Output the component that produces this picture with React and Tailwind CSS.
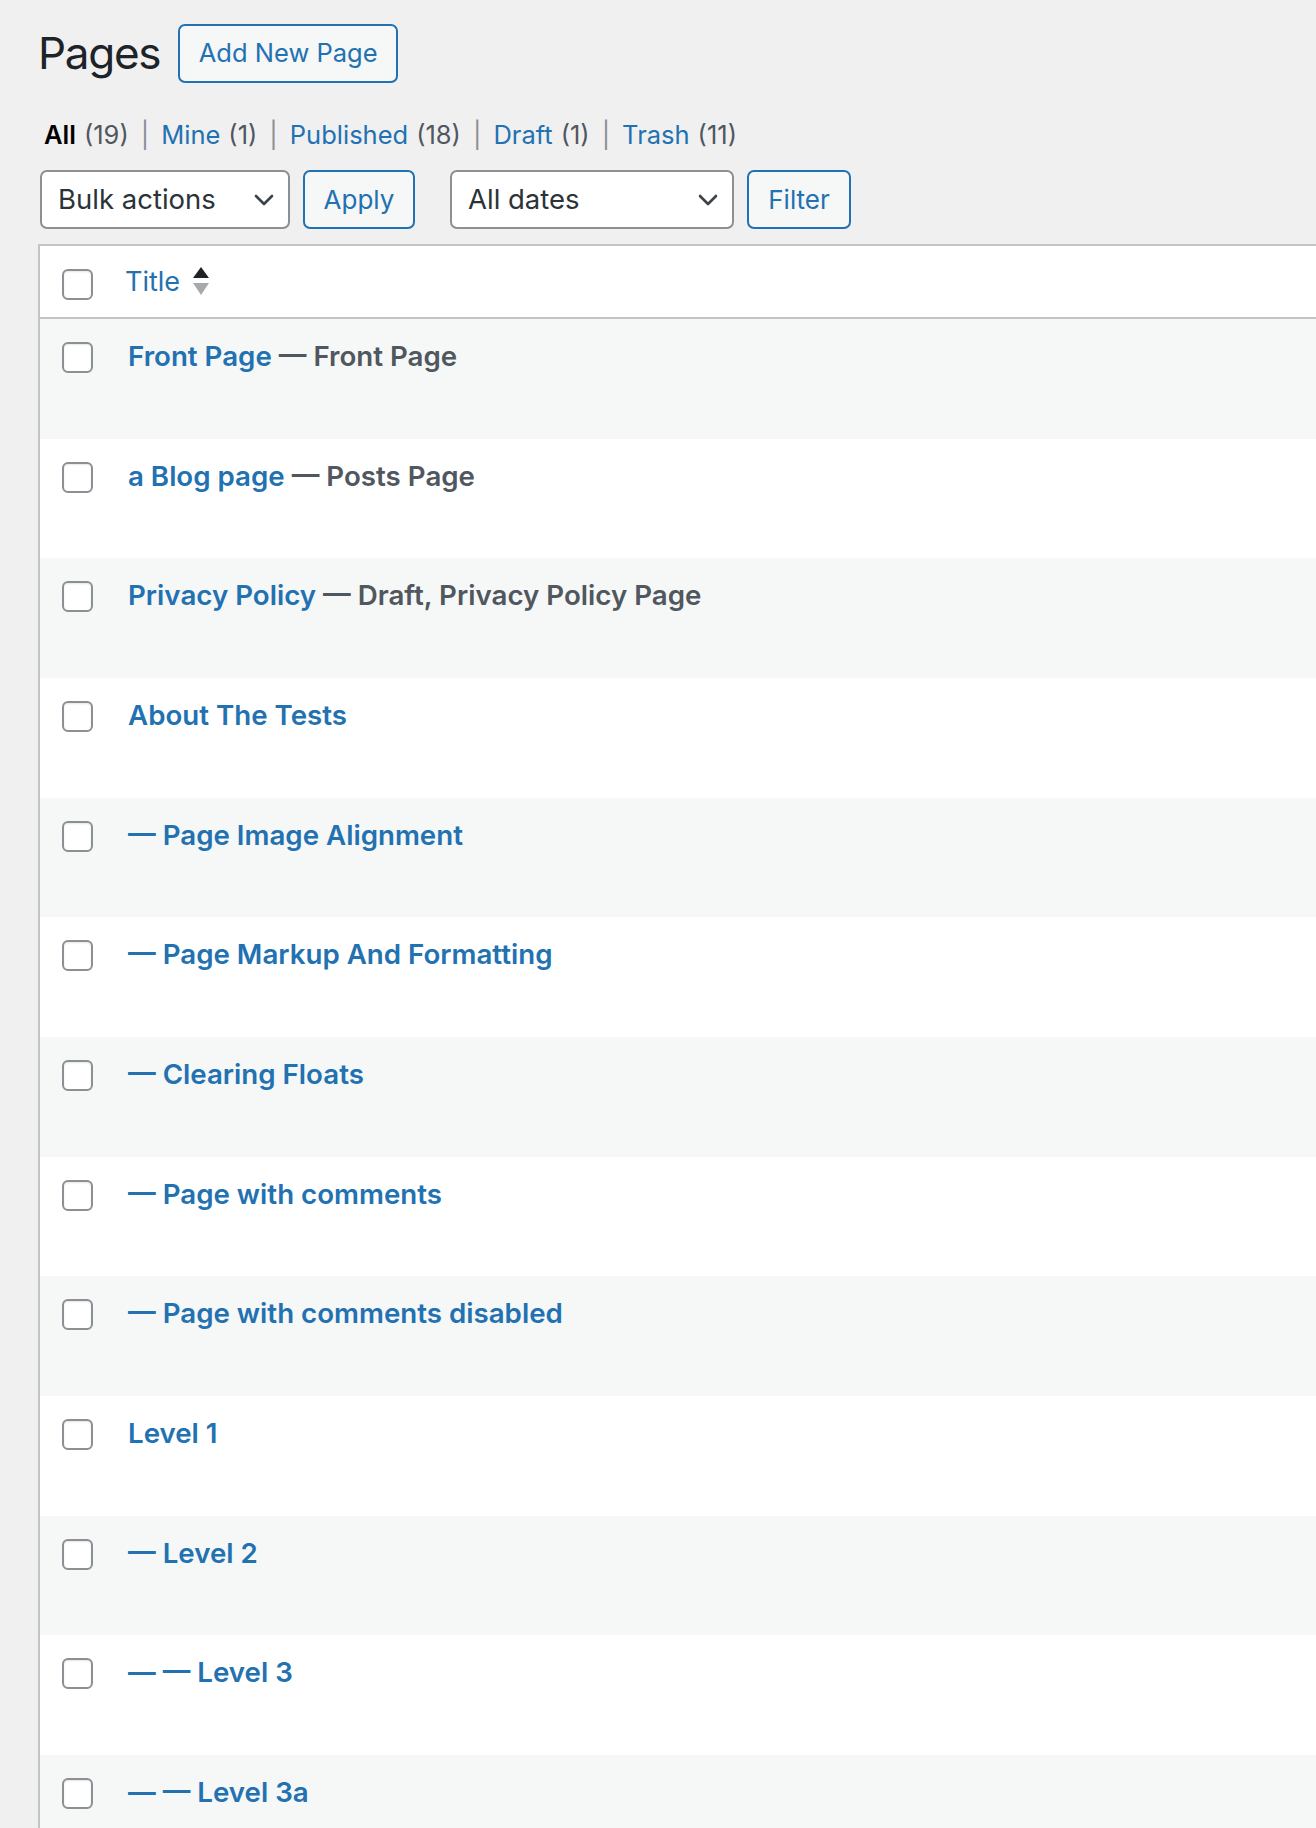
import React from "react";

const rows = [
  { title: "Front Page", state: "Front Page" },
  { title: "a Blog page", state: "Posts Page" },
  { title: "Privacy Policy", state: "Draft, Privacy Policy Page" },
  { title: "About The Tests" },
  { title: "— Page Image Alignment" },
  { title: "— Page Markup And Formatting" },
  { title: "— Clearing Floats" },
  { title: "— Page with comments" },
  { title: "— Page with comments disabled" },
  { title: "Level 1" },
  { title: "— Level 2" },
  { title: "— — Level 3" },
  { title: "— — Level 3a" },
];

function Checkbox() {
  return (
    <span className="block w-[31px] h-[31px] shrink-0 rounded-[6px] border-2 border-[#8c8f94] bg-white shadow-[inset_0_1px_2px_rgba(0,0,0,0.1)]" />
  );
}

function Chevron() {
  return (
    <svg width="20" height="12" viewBox="0 0 20 12" className="shrink-0">
      <path d="M2 2 L10 10 L18 2" fill="none" stroke="#3c434a" strokeWidth="2.6" strokeLinecap="round" strokeLinejoin="round" />
    </svg>
  );
}

function Select({ label, width }) {
  return (
    <div
      className={`flex items-center justify-between h-[59px] bg-white border-2 border-[#8c8f94] rounded-[7px] pl-[16px] pr-[14px] text-[27.5px] text-[#2c3338] ${width}`}
    >
      <span>{label}</span>
      <Chevron />
    </div>
  );
}

function Button({ children, className = "" }) {
  return (
    <div
      className={`flex items-center justify-center h-[59px] bg-[#f6f7f7] border-2 border-[#2271b1] rounded-[7px] text-[#2271b1] ${className}`}
    >
      {children}
    </div>
  );
}

function Sep() {
  return <span className="mx-[12px] text-[#8c8f94]">|</span>;
}

export default function App() {
  return (
    <div className="h-[1828px] overflow-hidden bg-[#f0f0f1] pl-[40px] pt-[24px] font-['Inter','Noto_Sans',sans-serif] text-[#3c434a]">
      {/* Header */}
      <div className="flex items-center">
        <h1 className="-ml-[2px] text-[44px] leading-[59px] text-[#1d2327] tracking-[-1.3px]">Pages</h1>
        <Button className="ml-[18px] w-[220px] text-[25.5px]">Add New Page</Button>
      </div>

      {/* Sub filter links */}
      <div className="mt-[36px] flex items-center text-[25.5px] leading-[32px] pl-[4px]">
        <span className="font-semibold text-black">All</span>
        <span className="ml-[8px] text-[#50575e]">(19)</span>
        <Sep />
        <span className="text-[#2271b1]">Mine</span>
        <span className="ml-[8px] text-[#50575e]">(1)</span>
        <Sep />
        <span className="text-[#2271b1]">Published</span>
        <span className="ml-[8px] text-[#50575e]">(18)</span>
        <Sep />
        <span className="text-[#2271b1]">Draft</span>
        <span className="ml-[8px] text-[#50575e]">(1)</span>
        <Sep />
        <span className="text-[#2271b1]">Trash</span>
        <span className="ml-[8px] text-[#50575e]">(11)</span>
      </div>

      {/* Tablenav */}
      <div className="mt-[19px] flex items-center">
        <Select label="Bulk actions" width="w-[250px]" />
        <Button className="ml-[13px] w-[112px] text-[26px]">Apply</Button>
        <Select label="All dates" width="ml-[35px] w-[284px]" />
        <Button className="ml-[13px] w-[104px] text-[26px]">Filter</Button>
      </div>

      {/* Table */}
      <div className="mt-[15px] -ml-[2px] border-t-2 border-l-2 border-[#c3c4c7]">
        <div className="h-[73px] bg-white border-b-2 border-[#c3c4c7] flex items-start pl-[22px] pt-[23px]">
          <Checkbox />
          <span className="ml-[32px] -mt-[5px] text-[27px] leading-[36px] text-[#2271b1]">Title</span>
          <svg width="16" height="28" viewBox="0 0 16 28" className="ml-[13px] -mt-[2px]">
            <path d="M8 0 L16 11 L0 11 Z" fill="#1d2327" />
            <path d="M0 16 L16 16 L8 28 Z" fill="#a7aaad" />
          </svg>
        </div>
        {rows.map((r, i) => (
          <div
            key={i}
            className={`h-[119.67px] flex items-start pl-[22px] pt-[23px] ${i % 2 === 0 ? "bg-[#f6f7f7]" : "bg-white"}`}
          >
            <Checkbox />
            <div className="ml-[35px] -mt-[4px] text-[27.7px] leading-[36px] font-semibold whitespace-nowrap">
              <span className="text-[#2271b1]">{r.title}</span>
              {r.state && <span className="text-[#50575e]"> — {r.state}</span>}
            </div>
          </div>
        ))}
      </div>
    </div>
  );
}
